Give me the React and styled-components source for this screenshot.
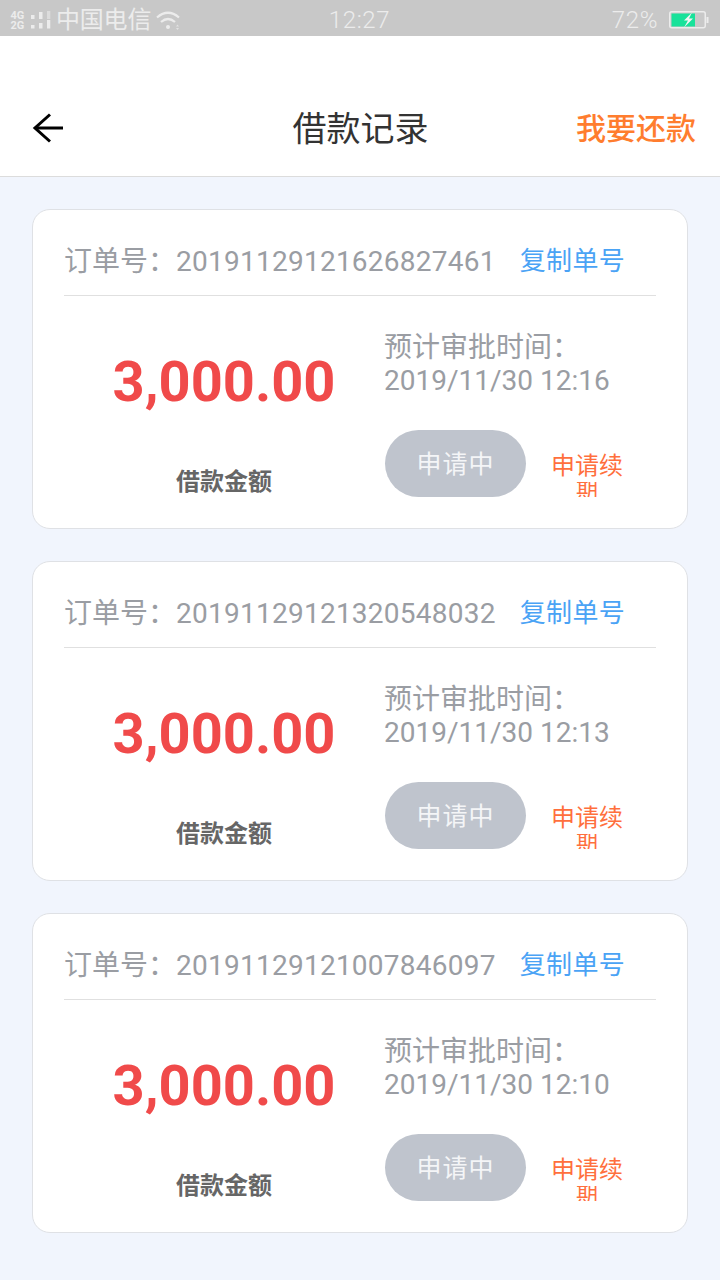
import React from 'react'
import styled, { createGlobalStyle } from 'styled-components'

const GlobalStyle = createGlobalStyle`
  html, body { margin: 0; padding: 0; }
  body { background: #f1f5fd; font-family: Roboto, "Noto Sans CJK SC", sans-serif; }
  * { box-sizing: border-box; }
`

const Page = styled.div`
  width: 720px;
  height: 1280px;
  overflow: hidden;
  background: #f1f5fd;
`

const StatusBar = styled.div`
  height: 36px;
  background: #c8c8c8;
  color: #ececec;
  display: grid;
  grid-template-columns: 1fr auto 1fr;
  align-items: center;
  padding: 0 11px 0 10px;
  font-size: 24px;
`

const StatusLeft = styled.div`
  display: flex;
  align-items: center;
  gap: 5px;
  height: 36px;
`

const StatusRight = styled.div`
  display: flex;
  align-items: center;
  justify-content: flex-end;
  gap: 11px;
  height: 36px;
`

const Carrier = styled.span`
  letter-spacing: -0.2px;
  line-height: 40px;
`

const Clock = styled.span`
  font-weight: 300;
  letter-spacing: 0.6px;
  line-height: 40px;
`

const NavBar = styled.header`
  height: 141px;
  padding: 55px 24px 0;
  background: #fff;
  border-bottom: 1px solid #dcdcdc;
  display: grid;
  grid-template-columns: 1fr auto 1fr;
  align-items: start;
`

const BackButton = styled.div`
  height: 74px;
  padding-left: 8px;
  display: flex;
  align-items: center;
`

const NavTitle = styled.h1`
  margin: 0;
  padding-left: 1px;
  font-size: 34px;
  line-height: 76px;
  font-weight: 400;
  color: #333;
`

const NavAction = styled.div`
  justify-self: end;
  font-size: 30px;
  line-height: 76px;
  font-weight: 500;
  color: #ff7d2e;
`

const List = styled.main`
  padding: 32px 32px 0;
  display: flex;
  flex-direction: column;
  gap: 32px;
`

const Card = styled.section`
  height: 320px;
  padding: 0 31px;
  background: #fff;
  border: 1px solid #dfe1e5;
  border-radius: 18px;
`

const OrderRow = styled.div`
  height: 86px;
  padding: 12px 31px 0 0;
  display: flex;
  align-items: center;
  justify-content: space-between;
  border-bottom: 1px solid #e0e0e0;
  font-size: 28px;
  color: #9a9da3;
`

const OrderNo = styled.span`
  white-space: nowrap;
`

const OrderDigits = styled.span`
  letter-spacing: 0.25px;
`

const CopyLink = styled.span`
  font-size: 26px;
  letter-spacing: 0.3px;
  color: #4aa3f5;
`

const CardBody = styled.div`
  display: flex;
`

const AmountColumn = styled.div`
  width: 320px;
  display: flex;
  flex-direction: column;
  align-items: center;
`

const Amount = styled.div`
  margin-top: 49px;
  font-size: 56px;
  line-height: 74px;
  font-weight: 700;
  color: #f04a4a;
`

const AmountLabel = styled.div`
  margin-top: 46px;
  font-size: 24px;
  line-height: 34px;
  font-weight: 700;
  color: #666;
`

const InfoColumn = styled.div`
  width: 272px;
  padding-top: 35px;
`

const ApproveText = styled.div`
  font-size: 28px;
  line-height: 33px;
  color: #9a9da3;
  white-space: nowrap;
`

const ActionRow = styled.div`
  margin: 33px 0 0 1px;
  display: flex;
  align-items: flex-start;
`

const StatusPill = styled.div`
  width: 141px;
  height: 67px;
  border-radius: 34px;
  background: #bfc4cd;
  color: #f4f5f7;
  font-size: 25px;
  line-height: 70px;
  text-align: center;
  letter-spacing: 1px;
`

const RenewLink = styled.div`
  margin: 20px 0 0 25px;
  width: 72px;
  color: #ff6f3d;
  text-align: center;
  font-size: 24px;
  line-height: 32px;
`

// the last character wraps and its box is too short, so top and bottom are cut off
const RenewClipped = styled.div`
  height: 15px;
  overflow: hidden;
  font-size: 22px;
  line-height: 15px;
`

const BatteryIcon = () => (
  <svg width="40" height="20" viewBox="0 0 40 20">
    <rect x="0.75" y="1.75" width="35.5" height="16" rx="2" fill="none" stroke="#ececec" strokeWidth="1.5" />
    <rect x="2.500" y="3.500" width="23.500" height="13" fill="#18e29a" />
    <rect x="37.500" y="7" width="2" height="6" fill="#ececec" />
    <path d="M23 2.500L15 10.500h4l-4 7 9-9h-4z" fill="#f4f4f4" />
  </svg>
)

const WifiIcon = () => (
  <svg width="25" height="20" viewBox="0 0 25 20" fill="none" stroke="#ececec" strokeWidth="2.200">
    <path d="M1 7.500Q12-2 23 7.500" />
    <path d="M5 12Q12 6 19 12" />
    <circle cx="12" cy="17" r="2" fill="#ececec" stroke="none" />
    <path d="M20 16.500l1.500-2 1.500 2zM20 18l1.500 2 1.500-2z" fill="#ececec" stroke="none" opacity="0.7" />
  </svg>
)

const SignalIcon = () => (
  <svg width="41" height="20" viewBox="0 0 41 20" fill="#ececec">
    <text x="0.500" y="9" fontSize="11" fontWeight="700" fontFamily="Roboto, sans-serif">4G</text>
    <text x="0.500" y="18.500" fontSize="11" fontWeight="700" fontFamily="Roboto, sans-serif">2G</text>
    <rect x="21" y="5" width="3.500" height="4" />
    <rect x="21" y="15" width="3.500" height="3.500" />
    <rect x="29" y="2" width="3.500" height="7" />
    <rect x="29" y="13" width="3.500" height="5.500" />
    <rect x="37" y="1" width="3.300" height="8" opacity="0.55" />
    <rect x="37" y="10" width="3.300" height="8.500" />
  </svg>
)

const ArrowIcon = () => (
  <svg width="32" height="30" viewBox="0 0 32 30" fill="none" stroke="#000" strokeWidth="3">
    <path d="M31 15H3" />
    <path d="M18 1.500L3 15l15 13.500" />
  </svg>
)

const orders = [
  { no: '20191129121626827461', time: '2019/11/30 12:16' },
  { no: '20191129121320548032', time: '2019/11/30 12:13' },
  { no: '20191129121007846097', time: '2019/11/30 12:10' },
]

const App = () => {
  return (
    <Page>
      <GlobalStyle />
      <StatusBar>
        <StatusLeft>
          <SignalIcon />
          <Carrier>中国电信</Carrier>
          <WifiIcon />
        </StatusLeft>
        <Clock>12:27</Clock>
        <StatusRight>
          <Clock>72%</Clock>
          <BatteryIcon />
        </StatusRight>
      </StatusBar>
      <NavBar>
        <BackButton><ArrowIcon /></BackButton>
        <NavTitle>借款记录</NavTitle>
        <NavAction>我要还款</NavAction>
      </NavBar>
      <List>
        {orders.map((order) => (
          <Card key={order.no}>
            <OrderRow>
              <OrderNo>订单号：<OrderDigits>{order.no}</OrderDigits></OrderNo>
              <CopyLink>复制单号</CopyLink>
            </OrderRow>
            <CardBody>
              <AmountColumn>
                <Amount>3,000.00</Amount>
                <AmountLabel>借款金额</AmountLabel>
              </AmountColumn>
              <InfoColumn>
                <ApproveText>预计审批时间：</ApproveText>
                <ApproveText>{order.time}</ApproveText>
                <ActionRow>
                  <StatusPill>申请中</StatusPill>
                  <RenewLink>
                    申请续
                    <RenewClipped>期</RenewClipped>
                  </RenewLink>
                </ActionRow>
              </InfoColumn>
            </CardBody>
          </Card>
        ))}
      </List>
    </Page>
  )
}

export default App
